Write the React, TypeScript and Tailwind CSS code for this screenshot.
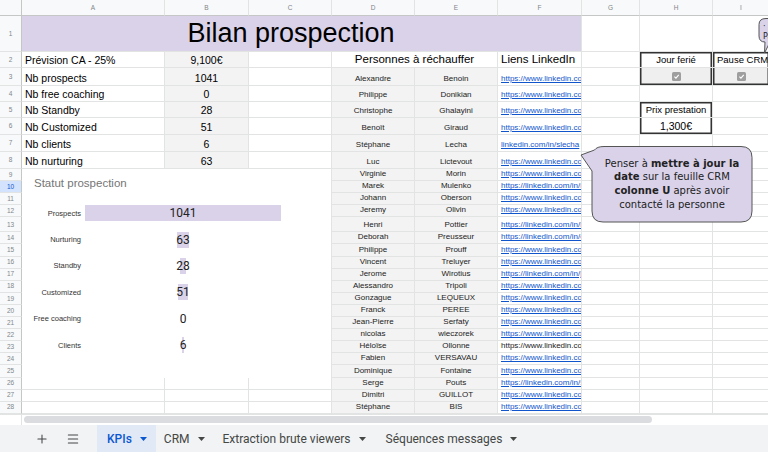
import type { ReactNode } from 'react';
import { Menu, Plus } from 'lucide-react';

const LETTERS = ['A', 'B', 'C', 'D', 'E', 'F', 'G', 'H', 'I'];

const kpis: [string, string][] = [
  ['Prévision CA - 25%', '9,100€'],
  ['Nb prospects', '1041'],
  ['Nb free coaching', '0'],
  ['Nb Standby', '28'],
  ['Nb Customized', '51'],
  ['Nb clients', '6'],
  ['Nb nurturing', '63'],
];

const WWW = 'https://www.linkedin.com/in/';

type Person = { first: string; last: string; url?: string; plain?: boolean };

// rows 3 -> 28
const people: Person[] = [
  { first: 'Alexandre', last: 'Benoin' },
  { first: 'Philippe', last: 'Donikian' },
  { first: 'Christophe', last: 'Ghalayini' },
  { first: 'Benoît', last: 'Giraud' },
  { first: 'Stéphane', last: 'Lecha', url: 'linkedin.com/in/slecha' },
  { first: 'Luc', last: 'Lictevout' },
  { first: 'Virginie', last: 'Morin' },
  { first: 'Marek', last: 'Mulenko', url: 'https://linkedin.com/in/marek-mulenko' },
  { first: 'Johann', last: 'Oberson' },
  { first: 'Jeremy', last: 'Olivin' },
  { first: 'Henri', last: 'Pottier', url: 'https://linkedin.com/in/henri-pottier' },
  { first: 'Deborah', last: 'Preusseur', url: 'https://linkedin.com/in/deborah-preusseur' },
  { first: 'Philippe', last: 'Prouff' },
  { first: 'Vincent', last: 'Treluyer' },
  { first: 'Jerome', last: 'Wirotius', url: 'https://linkedin.com/in/jerome-wirotius' },
  { first: 'Alessandro', last: 'Tripoli' },
  { first: 'Gonzague', last: 'LEQUEUX' },
  { first: 'Franck', last: 'PEREE' },
  { first: 'Jean-Pierre', last: 'Serfaty' },
  { first: 'nicolas', last: 'wieczorek' },
  { first: 'Héloïse', last: 'Ollonne', plain: true },
  { first: 'Fabien', last: 'VERSAVAU' },
  { first: 'Dominique', last: 'Fontaine' },
  { first: 'Serge', last: 'Pouts', url: 'https://linkedin.com/in/serge-pouts' },
  { first: 'Dimitri', last: 'GUILLOT' },
  { first: 'Stéphane', last: 'BIS' },
];

const funnel: [string, number][] = [
  ['Prospects', 1041],
  ['Nurturing', 63],
  ['Standby', 28],
  ['Customized', 51],
  ['Free coaching', 0],
  ['Clients', 6],
];

const base =
  'flex min-w-0 overflow-hidden whitespace-nowrap border-b border-r border-[#e2e3e3] leading-none';

function Cell({ className = '', children }: { className?: string; children?: ReactNode }) {
  return <div className={`${base} ${className}`}>{children}</div>;
}

function Checkbox() {
  return (
    <span className="flex h-[9px] w-[9px] items-center justify-center rounded-[1.5px] bg-[#9e9e9e]">
      <svg width="7" height="7" viewBox="0 0 10 10">
        <path d="M2 5.2 4.2 7.3 8.2 2.8" fill="none" stroke="#fff" strokeWidth="1.6" />
      </svg>
    </span>
  );
}

function Caret({ color = '#444746' }: { color?: string }) {
  return (
    <svg width="7" height="4" viewBox="0 0 7 4">
      <path d="M0 0h7L3.5 4z" fill={color} />
    </svg>
  );
}

function rowCells(r: number) {
  const out: ReactNode[] = [];
  out.push(
    <div
      key={`h${r}`}
      className={
        r === 10
          ? 'flex items-center justify-center border-b border-r border-b-[#e2e3e3] border-r-[#c4c7c5] bg-[#d3e3fd] text-[6.5px] text-[#0b57d0]'
          : 'flex items-center justify-center border-b border-r border-b-[#e2e3e3] border-r-[#c4c7c5] bg-[#f8f9fa] text-[6.5px] text-[#80868b]'
      }
    >
      {r}
    </div>,
  );

  if (r === 1) {
    out.push(
      <Cell key="title" className="col-span-6 items-center justify-center bg-[#d9d2e9] pr-[21px] text-[27px] text-black">
        Bilan prospection
      </Cell>,
      <Cell key="g1" />,
      <Cell key="h1" />,
      <Cell key="i1" />,
    );
    return out;
  }

  const kpi = r <= 8 ? kpis[r - 2] : null;
  out.push(
    <Cell key={`a${r}`} className="items-end pb-[2px] pl-[3px] text-[10.5px] text-black">
      {kpi?.[0]}
    </Cell>,
    <Cell
      key={`b${r}`}
      className={kpi ? 'items-end justify-center bg-[#f3f3f3] pb-[2px] text-[10.5px] text-black' : ''}
    >
      {kpi?.[1]}
    </Cell>,
    <Cell key={`c${r}`} />,
  );

  if (r === 2) {
    out.push(
      <Cell key="d2" className="col-span-2 items-end justify-center pb-[2px] text-[11.5px] text-black">
        Personnes à réchauffer
      </Cell>,
      <Cell key="f2" className="items-end pb-[2px] pl-[3px] text-[11.5px] text-black">
        Liens LinkedIn
      </Cell>,
    );
  } else {
    const p = people[r - 3];
    const url = p.url ?? WWW + p.first.toLowerCase() + '-' + p.last.toLowerCase();
    out.push(
      <Cell key={`d${r}`} className="items-end justify-center bg-[#f3f3f3] pb-[2px] text-[8px] text-[#222]">
        {p.first}
      </Cell>,
      <Cell key={`e${r}`} className="items-end justify-center bg-[#f3f3f3] pb-[2px] text-[8px] text-[#222]">
        {p.last}
      </Cell>,
      <Cell
        key={`f${r}`}
        className={
          p.plain
            ? 'items-end pb-[2px] pl-[3px] text-[8px] text-[#222]'
            : 'items-end pb-[2px] pl-[3px] text-[8px] text-[#1155cc] underline'
        }
      >
        {url}
      </Cell>,
    );
  }

  out.push(<Cell key={`g${r}`} />);

  if (r === 2) {
    out.push(
      <Cell key="h2" className="items-end justify-center pb-[3px] text-[9.5px] text-black shadow-[inset_1.5px_1.5px_0_0_#333,inset_-1.5px_0_0_0_#333]">
        Jour ferié
      </Cell>,
      <Cell key="i2" className="items-end pb-[3px] pl-[4px] text-[9.5px] text-black shadow-[inset_1.5px_1.5px_0_0_#333,inset_-1.5px_0_0_0_#333]">
        Pause CRM
      </Cell>,
    );
  } else if (r === 3) {
    out.push(
      <Cell key="h3" className="items-center justify-center bg-[#efefef] shadow-[inset_1.5px_-1.5px_0_0_#333,inset_-1.5px_0_0_0_#333]">
        <Checkbox />
      </Cell>,
      <Cell key="i3" className="items-center justify-center bg-[#efefef] shadow-[inset_1.5px_-1.5px_0_0_#333,inset_-1.5px_0_0_0_#333]">
        <Checkbox />
      </Cell>,
    );
  } else if (r === 5) {
    out.push(
      <Cell key="h5" className="items-end justify-center pb-[3px] text-[9.5px] text-black shadow-[inset_1.5px_1.5px_0_0_#333,inset_-1.5px_0_0_0_#333]">
        Prix prestation
      </Cell>,
      <Cell key="i5" />,
    );
  } else if (r === 6) {
    out.push(
      <Cell key="h6" className="items-center justify-center text-[10.5px] text-black shadow-[inset_1.5px_-1.5px_0_0_#333,inset_-1.5px_0_0_0_#333]">
        1,300€
      </Cell>,
      <Cell key="i6" />,
    );
  } else {
    out.push(<Cell key={`h${r}x`} />, <Cell key={`i${r}`} />);
  }
  return out;
}

function FunnelChart() {
  const max = Math.max(...funnel.map(([, v]) => v));
  return (
    <div className="absolute left-[22px] top-[169px] flex h-[209px] w-[309px] flex-col bg-white">
      <div className="pl-[12px] pt-[7px] font-['Liberation_Sans',Arial,sans-serif] text-[11.5px] leading-[14px] text-[#757575]">
        Statut prospection
      </div>
      <div className="mt-[10px] flex flex-col">
        {funnel.map(([label, v]) => (
          <div key={label} className="grid h-[26.4px] grid-cols-[59px_196px] items-center gap-x-[4px]">
            <div className="text-right font-['Liberation_Sans',Arial,sans-serif] text-[7.5px] text-[#333]">
              {label}
            </div>
            <div className="grid place-items-center">
              <div
                className="col-start-1 row-start-1 h-[16px] bg-[#d9d2e9]"
                style={{ width: `${(v / max) * 196}px` }}
              />
              <div className="col-start-1 row-start-1 font-['Roboto',sans-serif] text-[12px] leading-none text-[#222]">
                {v}
              </div>
            </div>
          </div>
        ))}
      </div>
    </div>
  );
}

function Callout() {
  return (
    <div className="absolute left-[579px] top-[144px] h-[80px] w-[176px]">
      <svg width="176" height="80" viewBox="0 0 176 80" className="absolute inset-0">
        <path
          d="M25 2.5H162Q173 2.5 173 13.5V67Q173 78 162 78H24Q13 78 13 67V27L2 11L15.5 6Q18 2.5 25 2.5Z"
          fill="#d9d2e9"
          stroke="#555"
          strokeWidth="1"
        />
      </svg>
      <div className="absolute left-[13px] top-[2px] flex h-[76px] w-[160px] items-center justify-center text-center font-['DejaVu_Sans',Verdana,sans-serif] text-[10px] leading-[13.7px] text-[#222]">
        <p>
          Penser à <b>mettre à jour la date</b> sur la feuille CRM <b>colonne U</b> après avoir contacté la personne
        </p>
      </div>
    </div>
  );
}

function SmallCallout() {
  return (
    <div className="absolute left-[755px] top-[16px] h-[40px] w-[40px]">
      <svg width="40" height="40" viewBox="0 0 40 40" className="absolute inset-0">
        <path
          d="M11 2.5H40V26H15L9.5 37L10 26Q4 26 4 20V8.5Q4 2.5 11 2.5Z"
          fill="#d9d2e9"
          stroke="#555"
          strokeWidth="1"
        />
      </svg>
      <div className="absolute left-[8px] top-[6px] font-['DejaVu_Sans',Verdana,sans-serif] text-[8px] leading-[10px] text-[#222]">
        <div>·</div>
        <div>Pause</div>
      </div>
    </div>
  );
}

function Tab({ label, active = false, className = '' }: { label: string; active?: boolean; className?: string }) {
  return (
    <div
      className={
        active
          ? `flex h-full items-center gap-[8px] bg-[#e1e9f7] pl-[10px] pr-[9px] font-medium text-[#0b57d0] ${className}`
          : `flex h-full items-center gap-[8px] px-[8px] text-[#444746] ${className}`
      }
    >
      <span>{label}</span>
      <Caret color={active ? '#0b57d0' : '#444746'} />
    </div>
  );
}

export default function App() {
  const rows = Array.from({ length: 28 }, (_, i) => i + 1);
  return (
    <div className="relative h-[452px] w-[768px] overflow-hidden bg-white font-['Liberation_Sans',Arial,sans-serif]">
      <div className="relative h-[414px]">
        <div className="grid w-[770px] grid-cols-[22px_143px_84px_83px_83px_83px_84px_58px_73px_57px] grid-rows-[16px_36px_16px_18px_16px_16px_17px_17px_17px_repeat(4,12.1px)_15px_repeat(15,12.1px)]">
          <div className="border-b border-r border-[#c4c7c5] bg-[#f8f9fa]" />
          {LETTERS.map((l) => (
            <div
              key={l}
              className="flex items-center justify-center border-b border-r border-b-[#c4c7c5] border-r-[#e2e3e3] bg-[#f8f9fa] text-[6.5px] text-[#80868b]"
            >
              {l}
            </div>
          ))}
          {rows.flatMap((r) => rowCells(r))}
        </div>
        <FunnelChart />
        <Callout />
        <SmallCallout />
      </div>

      <div className="flex h-[11px] border-t border-[#e2e3e3]">
        <div className="w-[22px] border-r border-[#e2e3e3]" />
        <div className="pl-[2px] pt-[1px]">
          <div className="h-[7px] w-[628px] rounded-full bg-[#dadce0]" />
        </div>
      </div>

      <div className="flex h-[27px] items-center bg-[#f1f3f4] pl-[28px] font-['Roboto',sans-serif] text-[12px]">
        <div className="flex w-[28px] justify-center text-[#444746]">
          <Plus size={14} strokeWidth={1.8} />
        </div>
        <div className="ml-[3px] flex w-[28px] justify-center text-[#444746]">
          <Menu size={14} strokeWidth={1.8} />
        </div>
        <div className="ml-[10px] flex h-full items-center">
          <Tab label="KPIs" active />
          <Tab label="CRM" />
          <Tab label="Extraction brute viewers" className="ml-[2px]" />
          <Tab label="Séquences messages" className="ml-[4px]" />
        </div>
      </div>
    </div>
  );
}
